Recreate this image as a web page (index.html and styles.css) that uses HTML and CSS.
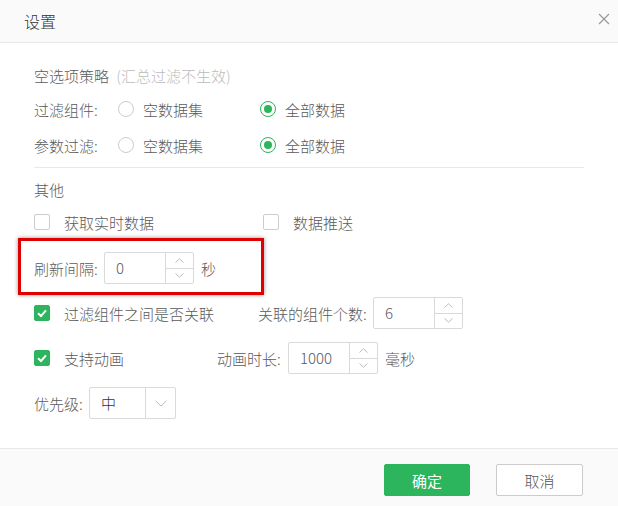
FILE: index.html
```html
<!DOCTYPE html>
<html lang="zh-CN">
  <head>
    <meta charset="UTF-8" />
    <title>设置</title>
    <link rel="stylesheet" href="styles.css">
  </head>
  <body>
    <div class="dialog">
      <div class="dialog-header">
        <span class="dialog-title">设置</span>
        <svg class="close-icon" width="12" height="12" viewBox="0 0 12 12">
          <path d="M1 1 L11 11 M11 1 L1 11" stroke="#999" stroke-width="1.2" fill="none" />
        </svg>
      </div>

      <div class="dialog-body">
        <div class="section-title first">空选项策略 <span class="hint">(汇总过滤不生效)</span></div>

        <div class="radio-row">
          <span class="row-label">过滤组件:</span>
          <label class="radio-item"><span class="radio"></span>空数据集</label>
          <label class="radio-item"><span class="radio checked"></span>全部数据</label>
        </div>
        <div class="radio-row">
          <span class="row-label">参数过滤:</span>
          <label class="radio-item"><span class="radio"></span>空数据集</label>
          <label class="radio-item"><span class="radio checked"></span>全部数据</label>
        </div>

        <div class="divider"></div>

        <div class="section-title">其他</div>

        <div class="check-row">
          <label class="check-item wide"><span class="checkbox"></span>获取实时数据</label>
          <label class="check-item"><span class="checkbox"></span>数据推送</label>
        </div>

        <div class="field-row refresh">
          <span class="field-label w-refresh">刷新间隔:</span>
          <div class="number-input">
            <span class="number-value">0</span>
            <div class="spinner">
              <span class="spin-btn"><svg width="9" height="5" viewBox="0 0 9 5"><path d="M0.5 4.5 L4.5 0.8 L8.5 4.5" stroke="#bbb" fill="none" /></svg></span>
              <span class="spin-btn"><svg width="9" height="5" viewBox="0 0 9 5"><path d="M0.5 0.5 L4.5 4.2 L8.5 0.5" stroke="#bbb" fill="none" /></svg></span>
            </div>
          </div>
          <span class="unit">秒</span>
        </div>

        <div class="field-row">
          <label class="check-item g-link"><span class="checkbox checked"><svg width="16" height="16" viewBox="0 0 16 16"><path d="M4 8.2 L7 11 L12 5.4" stroke="#fff" stroke-width="2" fill="none" /></svg></span>过滤组件之间是否关联</label>
          <span class="field-label w-link">关联的组件个数:</span>
          <div class="number-input">
            <span class="number-value">6</span>
            <div class="spinner">
              <span class="spin-btn"><svg width="9" height="5" viewBox="0 0 9 5"><path d="M0.5 4.5 L4.5 0.8 L8.5 4.5" stroke="#bbb" fill="none" /></svg></span>
              <span class="spin-btn"><svg width="9" height="5" viewBox="0 0 9 5"><path d="M0.5 0.5 L4.5 4.2 L8.5 0.5" stroke="#bbb" fill="none" /></svg></span>
            </div>
          </div>
        </div>

        <div class="field-row">
          <label class="check-item g-anim"><span class="checkbox checked"><svg width="16" height="16" viewBox="0 0 16 16"><path d="M4 8.2 L7 11 L12 5.4" stroke="#fff" stroke-width="2" fill="none" /></svg></span>支持动画</label>
          <span class="field-label w-anim">动画时长:</span>
          <div class="number-input">
            <span class="number-value">1000</span>
            <div class="spinner">
              <span class="spin-btn"><svg width="9" height="5" viewBox="0 0 9 5"><path d="M0.5 4.5 L4.5 0.8 L8.5 4.5" stroke="#bbb" fill="none" /></svg></span>
              <span class="spin-btn"><svg width="9" height="5" viewBox="0 0 9 5"><path d="M0.5 0.5 L4.5 4.2 L8.5 0.5" stroke="#bbb" fill="none" /></svg></span>
            </div>
          </div>
          <span class="unit">毫秒</span>
        </div>

        <div class="field-row">
          <span class="field-label w-priority">优先级:</span>
          <div class="select">
            <span class="select-value">中</span>
            <span class="select-arrow"><svg width="12" height="7" viewBox="0 0 12 7"><path d="M0.5 0.8 L6 6 L11.5 0.8" stroke="#bbb" fill="none" /></svg></span>
          </div>
        </div>

        <div class="highlight-box"></div>
      </div>

      <div class="dialog-footer">
        <button class="btn btn-primary">确定</button>
        <button class="btn btn-default">取消</button>
      </div>
    </div>
  </body>
</html>
```

FILE: styles.css
```css
body {
  margin: 0;
  font-family: "Noto Sans CJK SC", "Noto Sans", sans-serif;
  font-size: 15px;
  font-weight: 300;
  color: #5a5a5a;
  background: #fff;
}

.dialog {
  width: 618px;
  height: 506px;
  display: flex;
  flex-direction: column;
}

.dialog-header {
  height: 42px;
  background: #fafafa;
  border-bottom: 1px solid #e8e8e8;
  display: flex;
  align-items: center;
  justify-content: space-between;
  padding: 0 8px 0 24px;
}

.dialog-title {
  font-size: 16px;
  color: #333;
  line-height: 20px;
}

.close-icon {
  margin-top: -4px;
}

.dialog-body {
  position: relative;
  flex: 1;
  padding: 21px 34px 0 34px;
}

.section-title {
  height: 24px;
  line-height: 24px;
  margin-top: 10px;
}

.section-title.first {
  margin-top: 0;
}

.hint {
  color: #bbb;
  margin-left: 4px;
}

.radio-row {
  height: 36px;
  display: flex;
  align-items: center;
}

.section-title.first + .radio-row {
  margin-top: 3px;
}

.row-label {
  width: 84px;
}

.radio-item {
  width: 142px;
  display: flex;
  align-items: center;
  gap: 9px;
}

.radio {
  width: 16px;
  height: 16px;
  box-sizing: border-box;
  border: 1px solid #ccc;
  border-radius: 50%;
  position: relative;
}

.radio.checked {
  border-color: #2db55d;
}

.radio.checked::after {
  content: "";
  position: absolute;
  left: 3px;
  top: 3px;
  width: 8px;
  height: 8px;
  border-radius: 50%;
  background: #2db55d;
}

.divider {
  height: 1px;
  background: #e8e8e8;
  margin-top: 4px;
}

.check-row {
  height: 32px;
  margin-top: 4px;
  display: flex;
  align-items: center;
}

.check-item {
  display: flex;
  align-items: center;
  gap: 14px;
}

.check-item.wide {
  width: 229px;
}

.checkbox {
  width: 16px;
  height: 16px;
  box-sizing: border-box;
  border: 1px solid #ccc;
  border-radius: 2px;
  display: flex;
}

.checkbox.checked {
  background: #2db55d;
  border-color: #2db55d;
}

.checkbox.checked svg {
  margin: -1px;
}

.field-row {
  height: 32px;
  margin-top: 13px;
  display: flex;
  align-items: center;
}

.field-row.refresh {
  margin-top: 14px;
}

.field-label.w-refresh { width: 70px; }
.field-label.w-link { width: 115px; }
.field-label.w-anim { width: 71px; }
.field-label.w-priority { width: 55px; }

.check-item.g-link { width: 224px; }
.check-item.g-anim { width: 183px; }

.number-input {
  width: 90px;
  height: 32px;
  box-sizing: border-box;
  border: 1px solid #d9d9d9;
  border-radius: 2px;
  display: flex;
}

.number-value {
  flex: 1;
  line-height: 30px;
  padding-left: 11px;
}

.spinner {
  width: 27px;
  border-left: 1px solid #d9d9d9;
  display: flex;
  flex-direction: column;
}

.spin-btn {
  flex: 1;
  display: flex;
  align-items: center;
  justify-content: center;
}

.spin-btn + .spin-btn {
  border-top: 1px solid #d9d9d9;
}

.unit {
  margin-left: 7px;
}

.select {
  width: 87px;
  height: 32px;
  box-sizing: border-box;
  border: 1px solid #d9d9d9;
  border-radius: 2px;
  display: flex;
}

.select-value {
  flex: 1;
  line-height: 30px;
  padding-left: 11px;
  color: #333;
}

.select-arrow {
  width: 29px;
  border-left: 1px solid #d9d9d9;
  display: flex;
  align-items: center;
  justify-content: center;
}

.highlight-box {
  position: absolute;
  left: 18px;
  top: 195px;
  width: 246px;
  height: 57px;
  box-sizing: border-box;
  border: 3px solid #e00000;
  box-shadow: 0 0 4px rgba(0, 0, 0, 0.45);
}

.dialog-footer {
  height: 58px;
  background: #fafafa;
  border-top: 1px solid #e8e8e8;
  display: flex;
  justify-content: flex-end;
  align-items: flex-start;
  gap: 26px;
  padding: 15px 35px 0 0;
  box-sizing: border-box;
}

.btn {
  width: 87px;
  height: 32px;
  font-family: inherit;
  font-size: 15px;
  font-weight: 300;
  border-radius: 2px;
  cursor: pointer;
}

.btn-primary {
  width: 86px;
  background: #2db55d;
  border: 1px solid #2db55d;
  color: #fff;
  font-weight: 400;
}

.btn-default {
  background: #fff;
  border: 1px solid #ccc;
  color: #555;
}
```
